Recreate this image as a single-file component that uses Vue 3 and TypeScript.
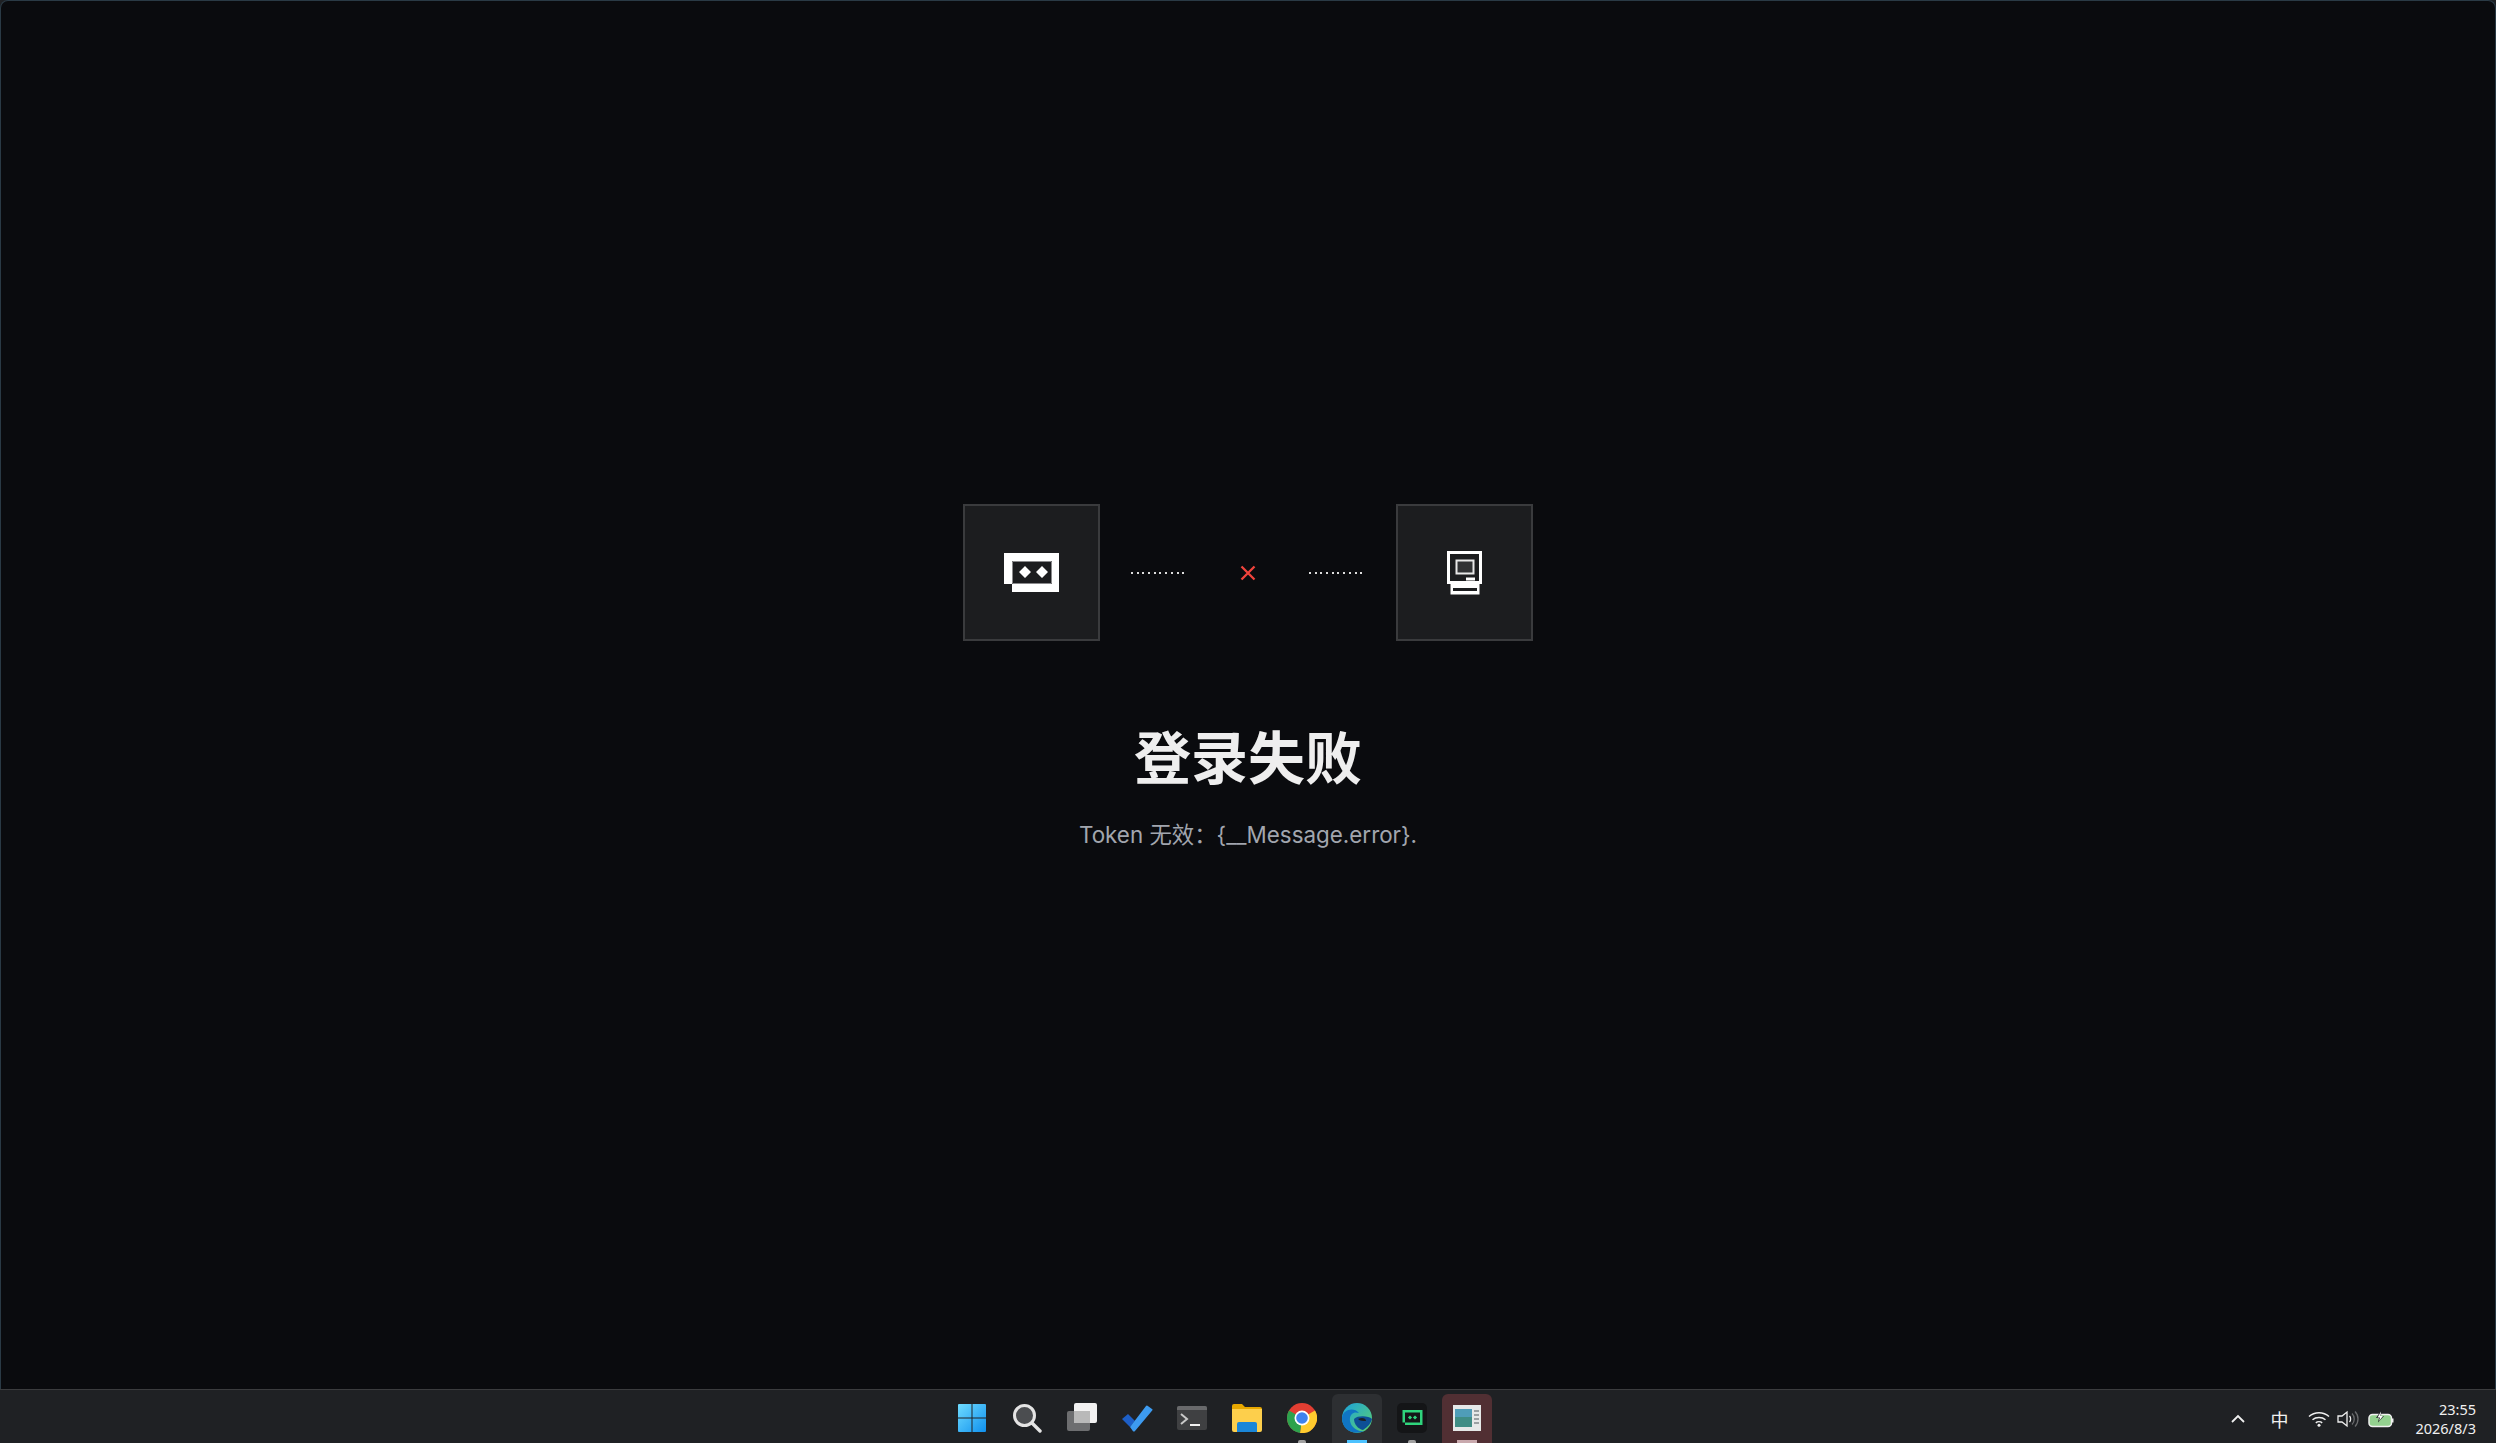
<script setup lang="ts">
// nothing dynamic on this page, it only shows the failed login state
const title = '登录失败'
const message = 'Token 无效：{__Message.error}.'
</script>

<template>
  <div class="screen">
    <main class="window">
      <div class="status">
        <div class="flow">
          <div class="tile">
            <svg class="bot" viewBox="0 0 56 40" width="56" height="40">
              <path fill="#fff" fill-rule="evenodd" d="M0 0H55V39H8V31H0ZM8 8V31H48V8Z" />
              <path fill="none" stroke="#8a8a8c" d="M8.500 8.500H47.500V30.500H8.500Z" />
              <path fill="#fff" d="M21 13l6 6-6 6-6-6ZM38 13l6 6-6 6-6-6Z" />
            </svg>
          </div>
          <span class="dots"></span>
          <svg class="cross" viewBox="0 0 16 16" width="16" height="16">
            <path fill="none" stroke="#f0443c" stroke-width="2.300" d="M1.500 1.500L14.500 14.500M14.500 1.500L1.500 14.500" />
          </svg>
          <span class="dots"></span>
          <div class="tile">
            <svg class="mac" viewBox="0 0 36 44" width="36" height="44">
              <path fill="none" stroke="#fff" stroke-width="3" d="M1.500 1.500H33.500V31.500H1.500Z" />
              <rect x="9.500" y="9.500" width="17" height="13" fill="#313234" stroke="#e8e8e8" stroke-width="2" />
              <path fill="#fff" d="M19 26.500H28V29.500H19Z" />
              <path fill="#fff" fill-rule="evenodd" d="M3.500 33H32.500V43.500H3.500ZM6 37V40H30V37Z" />
            </svg>
          </div>
        </div>
        <h1>{{ title }}</h1>
        <p>{{ message }}</p>
      </div>
    </main>

    <footer class="taskbar">
      <div class="apps">
        <button class="app">
          <svg viewBox="0 0 30 30" width="30" height="30">
            <defs>
              <linearGradient id="win" x1="0" y1="0" x2="1" y2="1">
                <stop offset="0" stop-color="#6fdcff" />
                <stop offset="1" stop-color="#0f90ee" />
              </linearGradient>
            </defs>
            <path fill="url(#win)" d="M1 2a1 1 0 0 1 1-1H14.500V14.500H1ZM15.500 1H28a1 1 0 0 1 1 1V14.500H15.500ZM1 15.500H14.500V29H2a1 1 0 0 1-1-1ZM15.500 15.500H29V28a1 1 0 0 1-1 1H15.500Z" />
          </svg>
        </button>
        <button class="app">
          <svg viewBox="0 0 30 30" width="30" height="30">
            <circle cx="12.500" cy="12.500" r="10" fill="#4b4d50" stroke="#e4e4e4" stroke-width="3" />
            <path d="M20 20L28 28" stroke="#e4e4e4" stroke-width="3.400" stroke-linecap="round" />
          </svg>
        </button>
        <button class="app">
          <svg viewBox="0 0 32 30" width="32" height="30">
            <rect x="8" y="0" width="23" height="20" rx="2" fill="#f2f2f2" />
            <rect x="1" y="8" width="23" height="20" rx="2" fill="#6d6e70" />
            <rect x="8" y="8" width="16" height="12" fill="#b9b9b9" />
          </svg>
        </button>
        <button class="app">
          <svg viewBox="0 0 32 28" width="32" height="28">
            <path fill="#1d5fc7" d="M1 15l6-5 7 7-5 6Z" />
            <path fill="#3d9bf0" d="M9 23L25 2a1 1 0 0 1 1.500-.2L31 5a1 1 0 0 1 .2 1.500L14 27a1.500 1.500 0 0 1-2 .2Z" />
          </svg>
        </button>
        <button class="app">
          <svg viewBox="0 0 30 24" width="30" height="24">
            <path fill="#3f4042" d="M2 0H28a2 2 0 0 1 2 2V22a2 2 0 0 1-2 2H2a2 2 0 0 1-2-2V2a2 2 0 0 1 2-2Z" />
            <path fill="#68696b" d="M2 0H28a2 2 0 0 1 2 2V4H0V2a2 2 0 0 1 2-2Z" />
            <path fill="none" stroke="#c9c9c9" stroke-width="2" d="M4 8l6 5-6 5" />
            <path stroke="#f2f2f2" stroke-width="2" d="M13 19H23" />
          </svg>
        </button>
        <button class="app">
          <svg viewBox="0 0 30 28" width="30" height="28">
            <path fill="#e8a800" d="M0 2a2 2 0 0 1 2-2H10l3 3H28a2 2 0 0 1 2 2V10H0Z" />
            <path fill="#fdcf4c" d="M0 5H30V26a2 2 0 0 1-2 2H2a2 2 0 0 1-2-2Z" />
            <path fill="#1a86d8" d="M5 20a2 2 0 0 1 2-2H23a2 2 0 0 1 2 2V28H5Z" />
          </svg>
        </button>
        <button class="app with-dot">
          <svg viewBox="0 0 30 30" width="30" height="30">
            <circle cx="15" cy="15" r="15" fill="#e23e32" />
            <path fill="#ffcb2e" d="M15 15L28 7.500A15 15 0 0 1 13 29.900Z" />
            <path fill="#2ca24d" d="M15 15L13 29.900A15 15 0 0 1 2 7.500Z" />
            <circle cx="15" cy="15" r="7.500" fill="#fff" />
            <circle cx="15" cy="15" r="5.800" fill="#3f82ee" />
          </svg>
        </button>
        <button class="app active">
          <svg viewBox="0 0 30 30" width="30" height="30">
            <defs>
              <linearGradient id="edge" x1="0" y1="0" x2="1" y2="1">
                <stop offset="0" stop-color="#1aa0dd" />
                <stop offset="1" stop-color="#5fd36a" />
              </linearGradient>
            </defs>
            <circle cx="15" cy="15" r="15" fill="url(#edge)" />
            <path fill="#1075c4" d="M0 15C1 6 12 4 17 10c-5-2-10 1-9 8 1 6 7 11 14 10-8 4-22 1-22-13Z" />
            <path fill="#0d4f96" d="M12 16c4-4 15-3 18 0-1 4-4 8-9 11-5-1-9-6-9-11Z" />
            <path fill="#1f2124" d="M16 16c4-2 8-1 8 2-3 0-6 0-8-2Z" />
          </svg>
          <i class="bar"></i>
        </button>
        <button class="app with-dot">
          <span class="term">
            <svg viewBox="0 0 24 18" width="21" height="15">
              <path fill="#2fd47c" fill-rule="evenodd" d="M0 0H24V18H3V15H0ZM3 3V15H21V3Z" />
              <path fill="#2fd47c" d="M9 6.500l2.500 2.500-2.500 2.500-2.500-2.500ZM15 6.500l2.500 2.500-2.500 2.500-2.500-2.500Z" />
            </svg>
          </span>
        </button>
        <button class="app current">
          <svg viewBox="0 0 28 26" width="28" height="26">
            <rect width="28" height="26" fill="#e6e8e8" />
            <rect x="2" y="4" width="17" height="18" fill="#3f8d85" />
            <rect x="2" y="4" width="17" height="8" fill="#4f9db8" />
            <path fill="#9aa0a3" d="M21 5H26V7H21ZM21 9H26V11H21ZM21 13H26V15H21ZM21 17H26V19H21Z" />
          </svg>
          <i class="bar muted"></i>
        </button>
      </div>

      <div class="tray">
        <svg class="chev" viewBox="0 0 14 9" width="14" height="9">
          <path fill="none" stroke="#f0f0f0" stroke-width="1.800" d="M1 8L7 2L13 8" />
        </svg>
        <span class="ime">中</span>
        <svg class="wifi" viewBox="0 0 22 16" width="22" height="16">
          <g fill="none" stroke="#f0f0f0" stroke-width="1.500">
            <path d="M1 5.500C6.500.5 15.500.5 21 5.500" />
            <path d="M4.500 8.800C8 5.800 14 5.800 17.500 8.800" />
            <path d="M7.800 11.800C9.500 10.500 12.500 10.500 14.200 11.800" />
          </g>
          <circle cx="11" cy="14.300" r="1.500" fill="#f0f0f0" />
        </svg>
        <svg class="vol" viewBox="0 0 22 18" width="22" height="18">
          <path fill="none" stroke="#f0f0f0" stroke-width="1.300" d="M1 6H5L10 2V16L5 12H1Z" />
          <path fill="none" stroke="#f0f0f0" stroke-width="1.300" d="M12.500 6C14 7.500 14 10.500 12.500 12" />
          <path fill="none" stroke="#6a6b6d" stroke-width="1.300" d="M15 3.500C18 6.500 18 11.500 15 14.500M18 1.500C22 5.500 22 12.500 18 16.500" />
        </svg>
        <svg class="batt" viewBox="0 0 26 18" width="26" height="18">
          <rect x="1" y="4.500" width="22.500" height="12" rx="3.500" fill="#93d18f" stroke="#f0f0f0" stroke-width="1.500" />
          <path fill="#f0f0f0" d="M24 8.500H25.500V12.500H24Z" />
          <path fill="#1f2124" d="M13.500 0L8 8H11L10 12.500L16 6H13Z" />
          <path fill="#fff" d="M13 1.500L9.500 7.500H12L11 11L15 6H12.500Z" />
        </svg>
        <div class="clock">
          <span>23:55</span>
          <span>2026/8/3</span>
        </div>
      </div>
    </footer>
  </div>
</template>

<style scoped>
.screen {
  height: 1443px;
  display: flex;
  flex-direction: column;
  overflow: hidden;
  background: #1f2124;
}

.window {
  flex: 1;
  background: #0a0b0e;
  border: 1px solid #2a3a45;
  border-bottom: 0;
  border-radius: 8px 8px 0 0;
  display: flex;
  justify-content: center;
  padding-top: 503px;
}

.status {
  display: flex;
  flex-direction: column;
  align-items: center;
}

.flow {
  display: flex;
  align-items: center;
}

.tile {
  width: 137px;
  height: 137px;
  box-sizing: border-box;
  background: #1c1d1f;
  border: 2px solid #3a3b3d;
  display: flex;
  align-items: center;
  justify-content: center;
}

.dots {
  width: 56px;
  height: 2px;
  margin: 0 31px;
  background: repeating-linear-gradient(to right, #dcdcdc 0 2px, transparent 2px 5.700px);
}

.cross {
  margin: 0 22px;
}

h1 {
  margin: 76px 0 0;
  font: 700 57px/84px "Inter", "Noto Sans CJK SC", sans-serif;
  color: #eeeeee;
}

p {
  margin: 18px 0 0;
  font: 400 22.400px/32px "Inter", "Noto Sans CJK SC", sans-serif;
  color: #a2a6ae;
}

.taskbar {
  height: 54px;
  box-sizing: border-box;
  border-top: 1px solid #3b3c3e;
  padding: 4px 20px 0 947px;
  display: flex;
  justify-content: space-between;
}

.apps {
  display: flex;
  gap: 5px;
}

.app {
  position: relative;
  width: 50px;
  height: 49px;
  padding: 0 0 2px;
  border: 0;
  border-radius: 6px 6px 0 0;
  background: none;
  display: flex;
  align-items: center;
  justify-content: center;
}

.app.active {
  background: #2d2f32;
}

.app.current {
  background: #512f33;
}

.with-dot::after {
  content: "";
  position: absolute;
  bottom: 0;
  left: 21px;
  width: 8px;
  height: 3px;
  border-radius: 2px 2px 0 0;
  background: #a0a0a0;
}

.bar {
  position: absolute;
  bottom: 0;
  left: 15px;
  width: 20px;
  height: 3px;
  background: #4cc2ff;
}

.bar.muted {
  background: #c9a9ad;
}

.term {
  width: 30px;
  height: 30px;
  border-radius: 5px;
  background: #141517;
  display: flex;
  align-items: center;
  justify-content: center;
}

.tray {
  display: flex;
  align-items: center;
  height: 49px;
  color: #f0f0f0;
  font-family: "Noto Sans", "Noto Sans CJK SC", sans-serif;
}

.chev {
  margin-right: 25px;
}

.ime {
  font-size: 18px;
  margin-right: 20px;
}

.wifi {
  margin-right: 7px;
}

.vol {
  margin-right: 9px;
}

.batt {
  margin-right: 21px;
}

.clock {
  display: flex;
  flex-direction: column;
  align-items: flex-end;
  font-size: 14.500px;
  line-height: 19px;
}
</style>

<style>
html,
body {
  background: #0a0b0e;
}
</style>
